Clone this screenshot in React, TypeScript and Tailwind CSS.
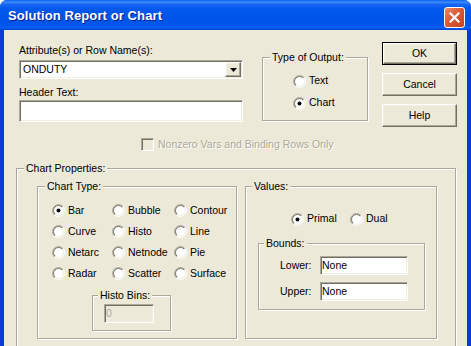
import React from "react";

const FONT = "font-['Liberation_Sans',Arial,sans-serif]";
const SUNKEN =
  "border border-t-[#aca899] border-l-[#aca899] border-b-white border-r-white shadow-[inset_1px_1px_0_#716f64,inset_-1px_-1px_0_#f1efe2]";
const RAISED =
  "border border-t-white border-l-white border-b-[#716f64] border-r-[#716f64] shadow-[inset_-1px_-1px_0_#aca899,inset_1px_1px_0_#f1efe2] bg-[#ece9d8]";

function Radio({ checked }: { checked?: boolean }) {
  return (
    <svg width="13" height="13" viewBox="0 0 13 13" className="shrink-0">
      <defs>
        <linearGradient id="rOuter" x1="0" y1="0" x2="1" y2="1">
          <stop offset="0.5" stopColor="#aca899" />
          <stop offset="0.5" stopColor="#ffffff" />
        </linearGradient>
        <linearGradient id="rInner" x1="0" y1="0" x2="1" y2="1">
          <stop offset="0.5" stopColor="#716f64" />
          <stop offset="0.5" stopColor="#f1efe2" />
        </linearGradient>
      </defs>
      <circle cx="6.5" cy="6.5" r="6" fill="none" stroke="url(#rOuter)" strokeWidth="1" />
      <circle cx="6.5" cy="6.5" r="5" fill="#ffffff" stroke="url(#rInner)" strokeWidth="1" />
      {checked && <circle cx="6.5" cy="6.5" r="2" fill="#000000" />}
    </svg>
  );
}

function RadioItem({ label, checked, className = "" }: { label: string; checked?: boolean; className?: string }) {
  return (
    <div className={`flex items-center ${className}`}>
      <Radio checked={checked} />
      <span className="ml-[3px]">{label}</span>
    </div>
  );
}

function Group({
  legend,
  legendMl,
  className,
  children,
}: {
  legend: string;
  legendMl: string;
  className: string;
  children?: React.ReactNode;
}) {
  return (
    <fieldset
      className={`m-0 p-0 min-w-0 shrink-0 border border-[#aca899] shadow-[1px_1px_0_#fff,inset_1px_1px_0_#fff] ${className}`}
    >
      <legend className={`px-[2px] leading-[14px] bg-[#ece9d8] ${legendMl}`}>{legend}</legend>
      {children}
    </fieldset>
  );
}

function Btn({ label, isDefault }: { label: string; isDefault?: boolean }) {
  const inner = <div className={`w-full h-full flex items-center justify-center ${RAISED}`}>{label}</div>;
  return isDefault ? (
    <div className="w-[75px] h-[23px] border border-black">{inner}</div>
  ) : (
    <div className="w-[75px] h-[23px]">{inner}</div>
  );
}

export default function App() {
  return (
    <div className={`w-[471px] h-[346px] overflow-hidden bg-white text-[10.5px] text-black ${FONT}`}>
      <div className="w-full h-full rounded-t-[7px] overflow-hidden flex flex-col bg-[#0a3ad8]">
        {/* Title bar */}
        <div className="h-[30px] shrink-0 flex items-start pl-[8px] pr-[6px] bg-[linear-gradient(180deg,#0a5ef0_0%,#3d8ffb_7%,#1a66f3_14%,#0058ee_30%,#0054e6_60%,#0057ec_85%,#0a5ef6_92%,#0045d0_100%)]">
          <div className="mt-[8px] leading-[16px] text-[13px] font-bold text-white [text-shadow:1px_1px_0_#0a1e8c] tracking-[0.1px]">
            Solution Report or Chart
          </div>
          <div className="ml-auto mt-[7px] w-[21px] h-[21px] rounded-[3px] border border-white flex items-center justify-center bg-[linear-gradient(135deg,#e98b6e_0%,#dc5a36_45%,#c8421d_100%)]">
            <svg width="11" height="11" viewBox="0 0 11 11">
              <path d="M1.5 1.5 L9.5 9.5 M9.5 1.5 L1.5 9.5" stroke="#ffffff" strokeWidth="2.2" strokeLinecap="square" />
            </svg>
          </div>
        </div>

        {/* Client area */}
        <div className="flex-1 mx-[4px] bg-[#ece9d8] flex flex-col">
          {/* Top row */}
          <div className="flex items-start pt-[12px] pl-[15px]">
            <div className="w-[224px] pt-[2px] shrink-0">
              <div className="h-[13px] leading-[13px]">Attribute(s) or Row Name(s):</div>
              <div className={`mt-[3px] h-[19px] w-[224px] bg-white p-[1px] flex ${SUNKEN}`}>
                <div className="flex-1 pl-[2px] leading-[15px]">ONDUTY</div>
                <div className={`w-[16px] h-full flex items-center justify-center ${RAISED}`}>
                  <svg width="7" height="4" viewBox="0 0 7 4">
                    <path d="M0 0 H7 L3.5 4 Z" fill="#000000" />
                  </svg>
                </div>
              </div>
              <div className="mt-[7px] h-[13px] leading-[13px]">Header Text:</div>
              <div className={`mt-[1px] h-[22px] w-[224px] bg-white ${SUNKEN}`} />
            </div>

            <Group legend="Type of Output:" legendMl="ml-[7px]" className="ml-[19px] mt-[8px] w-[106px] h-[71px]">
              <div className="pt-[6px] pl-[30px] flex flex-col">
                <RadioItem label="Text" className="h-[22px]" />
                <RadioItem label="Chart" checked className="h-[22px]" />
              </div>
            </Group>

            <div className="ml-[14px] flex flex-col gap-[8px]">
              <Btn label="OK" isDefault />
              <Btn label="Cancel" />
              <Btn label="Help" />
            </div>
          </div>

          {/* Checkbox row */}
          <div className="mt-[11px] pl-[137px] h-[13px] flex items-center">
            <div className={`w-[13px] h-[13px] bg-[#ece9d8] ${SUNKEN}`} />
            <span className="ml-[4px] text-[#aca899] [text-shadow:1px_1px_0_#fff]">
              Nonzero Vars and Binding Rows Only
            </span>
          </div>

          {/* Chart Properties */}
          <Group legend="Chart Properties:" legendMl="ml-[7px]" className="mt-[10px] ml-[12px] w-[440px] h-[220px]">
            <div className="flex pt-[4px] pl-[20px] gap-[8px]">
              <Group legend="Chart Type:" legendMl="ml-[7px]" className="w-[200px] h-[160px]">
                <div className="pt-[7px] pl-[14px] grid grid-cols-[60px_62px_auto]">
                  <RadioItem label="Bar" checked className="h-[21px]" />
                  <RadioItem label="Bubble" className="h-[21px]" />
                  <RadioItem label="Contour" className="h-[21px]" />
                  <RadioItem label="Curve" className="h-[21px]" />
                  <RadioItem label="Histo" className="h-[21px]" />
                  <RadioItem label="Line" className="h-[21px]" />
                  <RadioItem label="Netarc" className="h-[21px]" />
                  <RadioItem label="Netnode" className="h-[21px]" />
                  <RadioItem label="Pie" className="h-[21px]" />
                  <RadioItem label="Radar" className="h-[21px]" />
                  <RadioItem label="Scatter" className="h-[21px]" />
                  <RadioItem label="Surface" className="h-[21px]" />
                </div>
                <Group legend="Histo Bins:" legendMl="ml-[5px]" className="mt-[4px] ml-[54px] w-[79px] h-[43px]">
                  <div
                    className={`ml-[11px] mt-[2px] w-[50px] h-[19px] bg-[#ece9d8] pl-[1px] leading-[17px] text-[#aca899] ${SUNKEN}`}
                  >
                    0
                  </div>
                </Group>
              </Group>

              <Group legend="Values:" legendMl="ml-[6px]" className="w-[192px] h-[160px]">
                <div className="pt-[16px] pl-[45px] flex h-[36px]">
                  <RadioItem label="Primal" checked className="h-[20px] w-[59px]" />
                  <RadioItem label="Dual" className="h-[20px]" />
                </div>
                <Group legend="Bounds:" legendMl="ml-[5px]" className="mt-[7px] ml-[12px] w-[167px] h-[74px]">
                  <div className="pt-[6px] pl-[21px] flex flex-col gap-[7px]">
                    <div className="flex items-center">
                      <span className="w-[40px]">Lower:</span>
                      <div className={`w-[88px] h-[19px] bg-white pl-[1px] leading-[17px] ${SUNKEN}`}>None</div>
                    </div>
                    <div className="flex items-center">
                      <span className="w-[40px]">Upper:</span>
                      <div className={`w-[88px] h-[19px] bg-white pl-[1px] leading-[17px] ${SUNKEN}`}>None</div>
                    </div>
                  </div>
                </Group>
              </Group>
            </div>
          </Group>
        </div>
      </div>
    </div>
  );
}
